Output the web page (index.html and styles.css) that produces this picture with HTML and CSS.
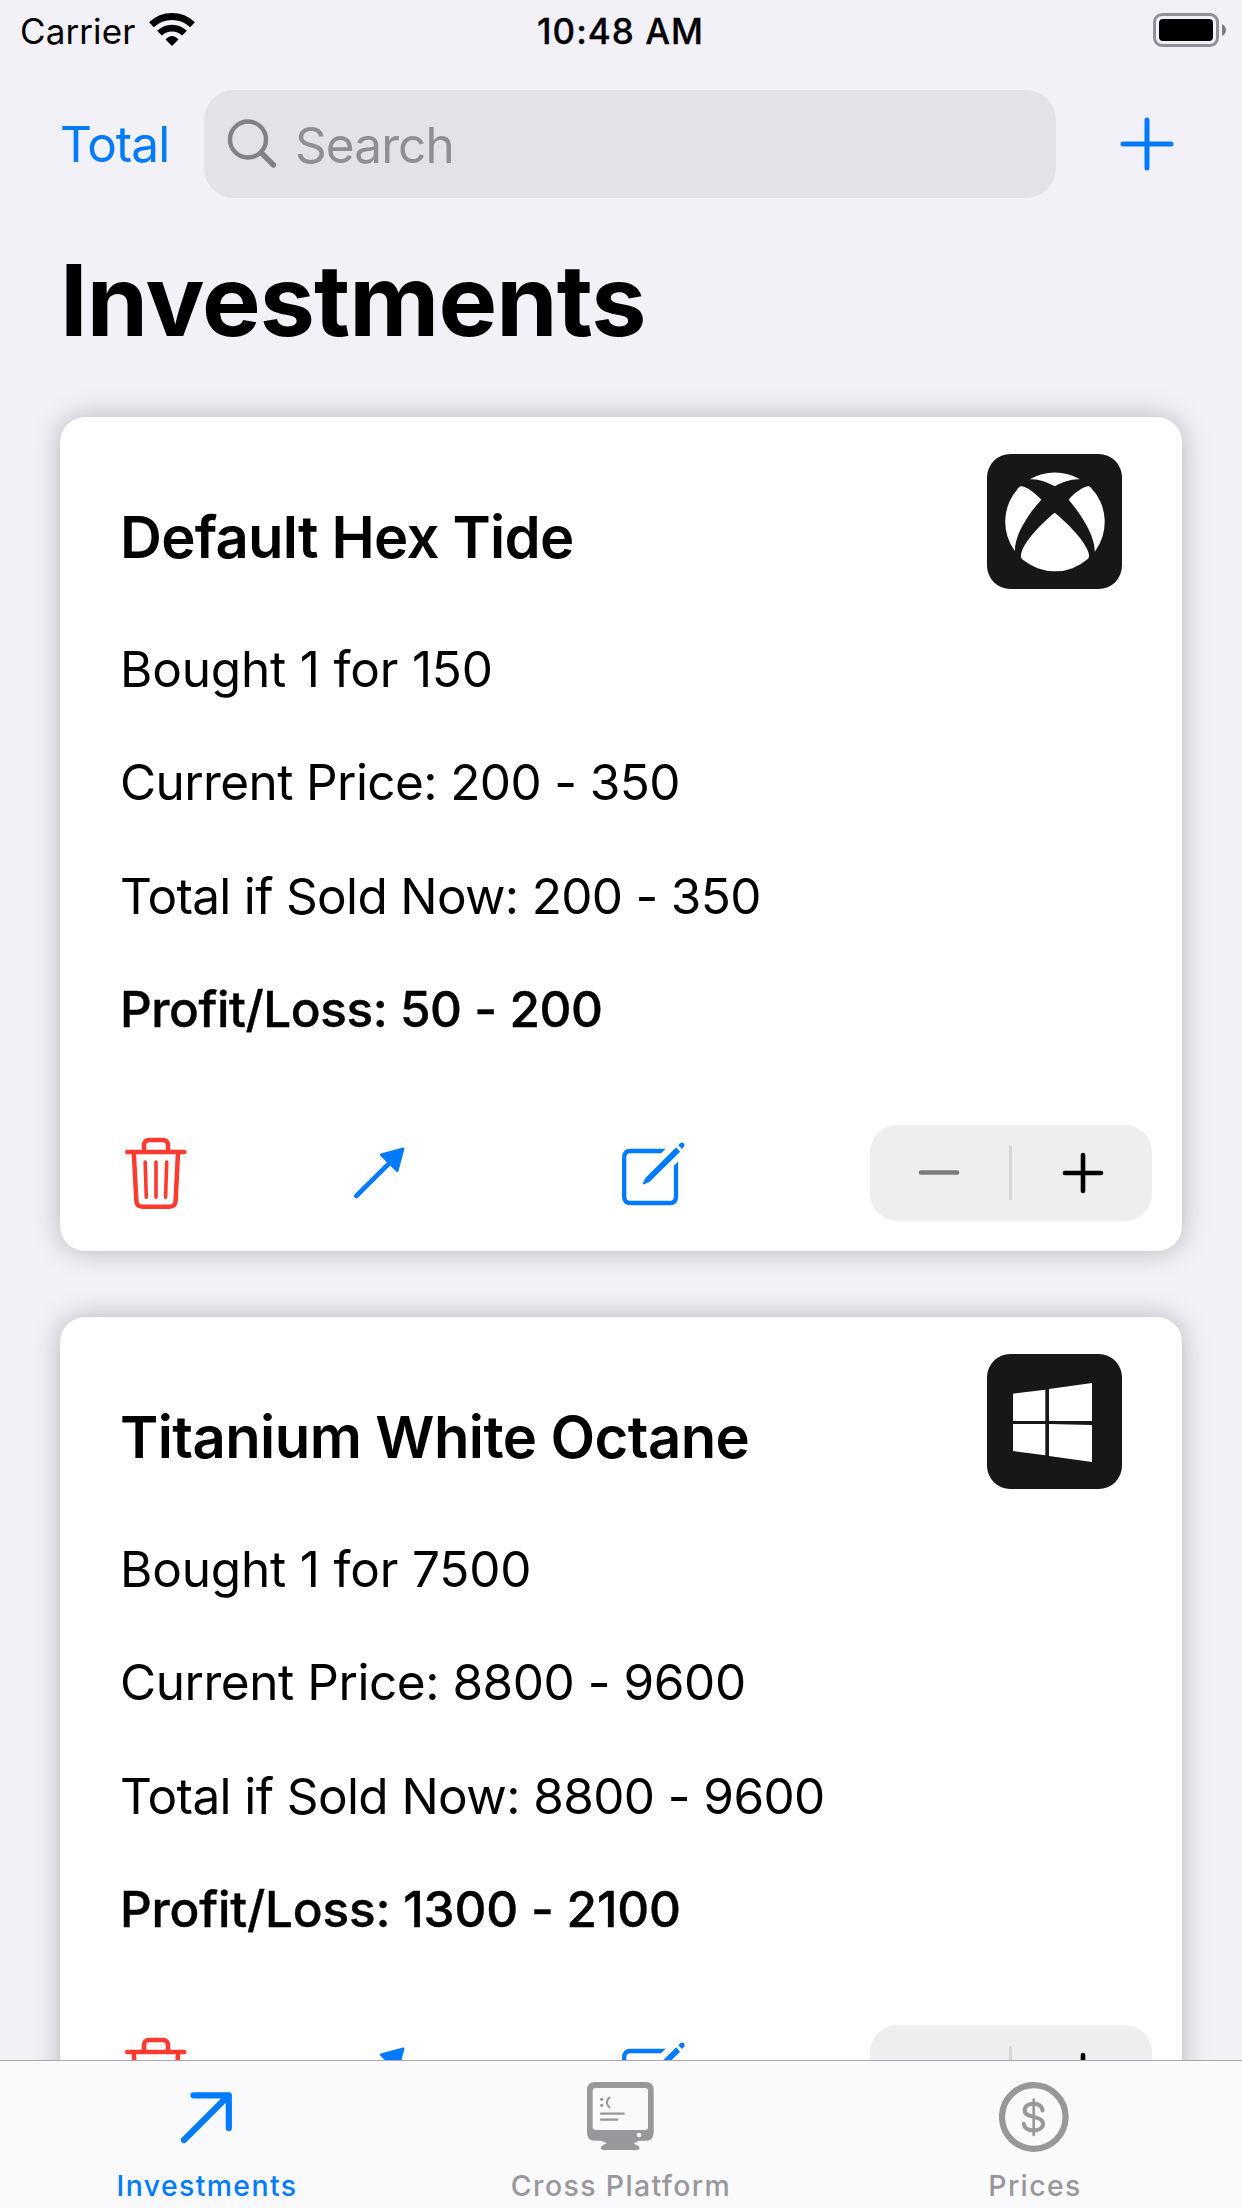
FILE: index.html
```html
<!DOCTYPE html>
<html lang="en">
<head>
<meta charset="utf-8">
<title>Investments</title>
<link rel="stylesheet" href="styles.css">
</head>
<body>
<svg class="sprite" aria-hidden="true">
  <symbol id="trash" viewBox="0 0 72 96">
    <g fill="none" stroke="currentColor" stroke-width="4.5" stroke-linecap="round" stroke-linejoin="round">
      <path d="M24 27V20.500q0-5.500 5.500-5.500h13q5.500 0 5.500 5.500V27"/>
      <path d="M7.200 27H64.300"/>
      <path d="M13.800 28L16.400 76q.3 5.700 6 5.700h27.200q5.700 0 6-5.700L58 28"/>
      <path stroke-width="3.6" d="M25.200 37l1.100 35.300M36 37v35.300M46.700 37l-1.100 35.300"/>
    </g>
  </symbol>
  <symbol id="arrow" viewBox="0 0 64 96">
    <path d="M8.300 71L42 37.500" fill="none" stroke="currentColor" stroke-width="4.600" stroke-linecap="round"/>
    <path d="M55.200 23.800L33.200 29.800L49.300 45.800Z" fill="currentColor" stroke="currentColor" stroke-width="2.500" stroke-linejoin="round"/>
  </symbol>
  <symbol id="edit" viewBox="0 0 76 96">
    <path d="M45.200 26H14.500q-6.300 0-6.300 6.300v39.400q0 6.300 6.300 6.300h39.200q6.300 0 6.300-6.300V40.800" fill="none" stroke="currentColor" stroke-width="4.300"/>
    <path d="M45 23.850h4.700l-4.700 4.300zM57.850 41v-.3l4.300-4.300V41z" fill="currentColor"/>
    <path d="M60.200 22.300l3.900 4.400L33.700 56.700l-6 2.700q-1 .2-.8-.8l2.500-5.700z" fill="currentColor"/>
    <path d="M62.300 20.300l1.800-2q1.900-1.700 3.700 0t0 3.700l-1.800 1.900z" fill="currentColor"/>
  </symbol>
  <symbol id="xbox" viewBox="141 102 405 405">
    <rect x="141" y="102" width="405" height="405" rx="70" fill="#171717"/>
    <g fill="#fff">
      <path d="M269 178A149.500 149.500 0 0 1 420 178C395 176 370 185 344 199C318 185 295 176 269 178Z"/>
      <path d="M245 199C262 201 285 220 304 239C262 285 222 350 225 394A149.500 149.500 0 0 1 238 201Q241 198 245 199Z"/>
      <path d="M444 199C427 201 404 219 386 239C425 285 467 352 464 396A149.500 149.500 0 0 0 451 201Q448 198 444 199Z"/>
      <path d="M344 278C295 318 238 380 243 412Q244 415 247 418A149.500 149.500 0 0 0 443 417Q446 414 447 411C450 380 393 318 344 278Z"/>
    </g>
  </symbol>
  <symbol id="windows" viewBox="141 132 405 405">
    <rect x="141" y="132" width="405" height="405" rx="70" fill="#171717"/>
    <path fill="#fff" d="M219 251L316 239V333H219ZM327 237L456 219V333H327ZM219 342H316V436L219 423ZM327 342L456 345V456L327 438Z"/>
  </symbol>
  <symbol id="minus" viewBox="0 0 42 42"><path d="M3 20.500H39" stroke="currentColor" stroke-width="4.600" stroke-linecap="round"/></symbol>
  <symbol id="plus" viewBox="0 0 42 42"><path d="M3 21H39M21 3V39" stroke="currentColor" stroke-width="4.600" stroke-linecap="round"/></symbol>
</svg>

<header class="status">
  <div class="carrier">Carrier
    <svg class="wifi" width="46" height="36" viewBox="0 0 46 36">
      <g fill="none" stroke="#000" stroke-width="6.800"><path d="M2.500 12.800A29.500 29.500 0 0 1 43.500 12.800"/><path d="M10.500 21.100A18 18 0 0 1 35.500 21.100"/></g>
      <path d="M23 34L16.500 27.600Q19.500 24 23 24T29.500 27.600Z"/>
    </svg>
  </div>
  <div class="clock">10:48 AM</div>
  <svg class="battery" width="74" height="34" viewBox="0 0 74 34">
    <rect x="1.500" y="1.500" width="63" height="31" rx="7.500" fill="none" stroke="#919095" stroke-width="3"/>
    <rect x="6" y="6" width="54" height="22" rx="4"/>
    <path d="M69 11Q73 13 73 17T69 23Z" fill="#7e7e82"/>
  </svg>
</header>

<nav class="toolbar">
  <a class="total">Total</a>
  <div class="search">
    <svg width="52" height="52" viewBox="0 0 52 52" fill="none" stroke="#828187" stroke-linecap="round">
      <circle cx="21" cy="21.500" r="18" stroke-width="4.400"/><path d="M34.500 35L46.500 47" stroke-width="5.400"/>
    </svg>
    <span>Search</span>
  </div>
  <svg class="add" width="56" height="56" viewBox="0 0 56 56"><path d="M4 28H52M28 4V52" stroke="currentColor" stroke-width="5" stroke-linecap="round"/></svg>
</nav>

<h1 class="title">Investments</h1>

<main class="list">
  <article class="card">
    <div class="card-head"><h2 class="snug">Default Hex Tide</h2><svg class="badge"><use href="#xbox"/></svg></div>
    <p class="bought">Bought 1 for 150</p>
    <p class="tight">Current Price: 200 - 350</p>
    <p class="tighter">Total if Sold Now: 200 - 350</p>
    <p class="profit">Profit/Loss: 50 - 200</p>
    <div class="actions">
      <svg class="trash" width="72" height="96"><use href="#trash"/></svg>
      <svg width="64" height="96"><use href="#arrow"/></svg>
      <svg width="76" height="96"><use href="#edit"/></svg>
      <div class="stepper"><svg class="dim" width="42" height="42"><use href="#minus"/></svg><i></i><svg width="42" height="42"><use href="#plus"/></svg></div>
    </div>
  </article>
  <article class="card">
    <div class="card-head"><h2>Titanium White Octane</h2><svg class="badge"><use href="#windows"/></svg></div>
    <p class="bought">Bought 1 for 7500</p>
    <p>Current Price: 8800 - 9600</p>
    <p class="tight">Total if Sold Now: 8800 - 9600</p>
    <p class="profit loose">Profit/Loss: 1300 - 2100</p>
    <div class="actions">
      <svg class="trash" width="72" height="96"><use href="#trash"/></svg>
      <svg width="64" height="96"><use href="#arrow"/></svg>
      <svg width="76" height="96"><use href="#edit"/></svg>
      <div class="stepper"><svg class="dim" width="42" height="42"><use href="#minus"/></svg><i></i><svg width="42" height="42"><use href="#plus"/></svg></div>
    </div>
  </article>
</main>

<footer class="tabs">
  <div class="tab active">
    <svg width="72" height="72" viewBox="0 0 72 72" fill="none" stroke="currentColor" stroke-width="6.200" stroke-linecap="round" stroke-linejoin="round"><path d="M13 59L57 15M22.500 14.300H57.800V47"/></svg>
    <span>Investments</span>
  </div>
  <div class="tab">
    <svg width="72" height="72" viewBox="75 33 216 216" fill="currentColor">
      <path fill-rule="evenodd" d="M105 36H257Q281 36 281 60V188Q281 212 257 212H237L220 221Q239 226 239 234Q238 240 232 240H130Q122 240 122 234Q123 226 141 220L124 212H105Q81 212 81 188V60Q81 36 105 36ZM107 54Q98 54 98 63V171Q98 180 107 180H255Q264 180 264 171V63Q264 54 255 54ZM237 188a7 7 0 1 0 .1 0Z"/>
      <circle cx="125" cy="88" r="5"/><circle cx="125" cy="106" r="5"/>
      <path d="M148 83Q133 97 148 112M123 131H191M123 149H172" fill="none" stroke="currentColor" stroke-width="6.500" stroke-linecap="round"/>
    </svg>
    <span>Cross Platform</span>
  </div>
  <div class="tab">
    <svg width="72" height="72" viewBox="0 0 72 72" fill="none" stroke="currentColor" stroke-linecap="round">
      <circle cx="34.800" cy="36" r="31.800" stroke-width="6.200"/>
      <path stroke-width="4" d="M43.500 29.500C42.900 25 39.500 22.700 34.700 22.700C29 22.700 25.700 25.600 25.700 29.300C25.700 33.700 29.800 34.900 34.700 35.900C40 37 44 38.600 44 42.800C44 47 40 49.400 34.700 49.400C29 49.400 25.400 47 24.700 42.800"/>
      <path stroke-width="2.600" d="M34.700 18.500V54"/>
    </svg>
    <span>Prices</span>
  </div>
</footer>
</body>
</html>
```
FILE: styles.css
```css
* { box-sizing: border-box; margin: 0; padding: 0; }

body {
  width: 1242px;
  height: 2208px;
  overflow: hidden;
  display: flex;
  flex-direction: column;
  background: #f2f1f7;
  color: #000;
  font-family: Inter, "Liberation Sans", sans-serif;
}

svg { display: block; flex: none; }
.sprite { display: none; }

.status {
  flex: none;
  height: 60px;
  display: grid;
  grid-template-columns: 1fr auto 1fr;
  align-items: center;
  padding: 2px 15px 0 20px;
  font-size: 35px;
  line-height: 44px;
}
.carrier { display: flex; align-items: center; gap: 14px; letter-spacing: 0.1px; }
.wifi { margin-top: -2px; }
.clock { padding-right: 6px; font-weight: 500; letter-spacing: 1px; -webkit-text-stroke: 0.3px; }
.battery { justify-self: end; margin-top: -2px; }

.toolbar {
  flex: none;
  height: 168px;
  display: grid;
  grid-template-columns: 144px 852px 1fr;
  align-items: center;
  padding: 0 67px 0 60px;
}
.total { color: #007aff; font-size: 49.5px; letter-spacing: -0.95px; }
.search {
  height: 108px;
  display: flex;
  align-items: center;
  gap: 16px;
  padding-left: 23px;
  border-radius: 30px;
  background: #e3e2e7;
  color: #8f8e94;
  font-size: 49.5px;
  letter-spacing: -0.9px;
}
.search span { padding-top: 2px; }
.add { justify-self: end; color: #007aff; }

.title {
  flex: none;
  height: 189px;
  padding: 12px 60px 0;
  font-size: 98.6px;
  line-height: 120px;
  font-weight: 700;
  letter-spacing: -0.91px;
}

/* The top padding leaves room for the first card's shadow. */
.list {
  flex: 1;
  min-height: 0;
  margin-top: -40px;
  padding: 40px 60px 0;
  display: flex;
  flex-direction: column;
  gap: 66px;
  overflow: hidden;
}
.card {
  flex: none;
  height: 834px;
  padding: 37px 30px 30px 60px;
  display: flex;
  flex-direction: column;
  border-radius: 25px;
  background: #fff;
  box-shadow: 0 0 28px rgba(0, 0, 0, 0.25);
}
.card-head {
  display: flex;
  justify-content: space-between;
  height: 159px;
  padding-right: 30px;
}
.card-head h2 {
  padding-top: 48px;
  font-size: 58px;
  line-height: 70px;
  font-weight: 600;
  letter-spacing: -0.58px;
}
.badge { width: 135px; height: 135px; }
.card p {
  font-size: 49.5px;
  line-height: 113.4px;
  letter-spacing: -0.45px;
}
.card .profit { font-weight: 500; letter-spacing: -0.45px; -webkit-text-stroke: 0.4px; }
.card .loose { letter-spacing: -0.2px; }
.card .bought { letter-spacing: -0.18px; }
.card .tight { letter-spacing: -0.6px; }
.card .tighter { letter-spacing: -0.68px; }
.card .snug { letter-spacing: -0.75px; }

.actions {
  margin-top: auto;
  display: grid;
  grid-template-columns: 228px 268px 254px 282px;
  color: #007aff;
}
.trash { color: #ff3b30; }
.stepper {
  height: 96px;
  display: flex;
  align-items: center;
  justify-content: space-between;
  padding: 0 48.5px 0 48px;
  border-radius: 27px;
  background: #eee;
  color: #000;
}
.stepper i { width: 3px; height: 54px; border-radius: 1px; background: #d6d6d6; }
.dim { color: #7b7b7b; }

.tabs {
  flex: none;
  height: 148px;
  display: grid;
  grid-template-columns: repeat(3, 1fr);
  border-top: 1px solid #a9a9ad;
  background: #fafafc;
  color: #98979c;
}
.tab {
  display: flex;
  flex-direction: column;
  align-items: center;
  gap: 16px;
  padding-top: 20px;
  font-size: 28.4px;
  line-height: 34px;
  font-weight: 500;
  letter-spacing: 1.4px;
}
.active { color: #007aff; }
```
